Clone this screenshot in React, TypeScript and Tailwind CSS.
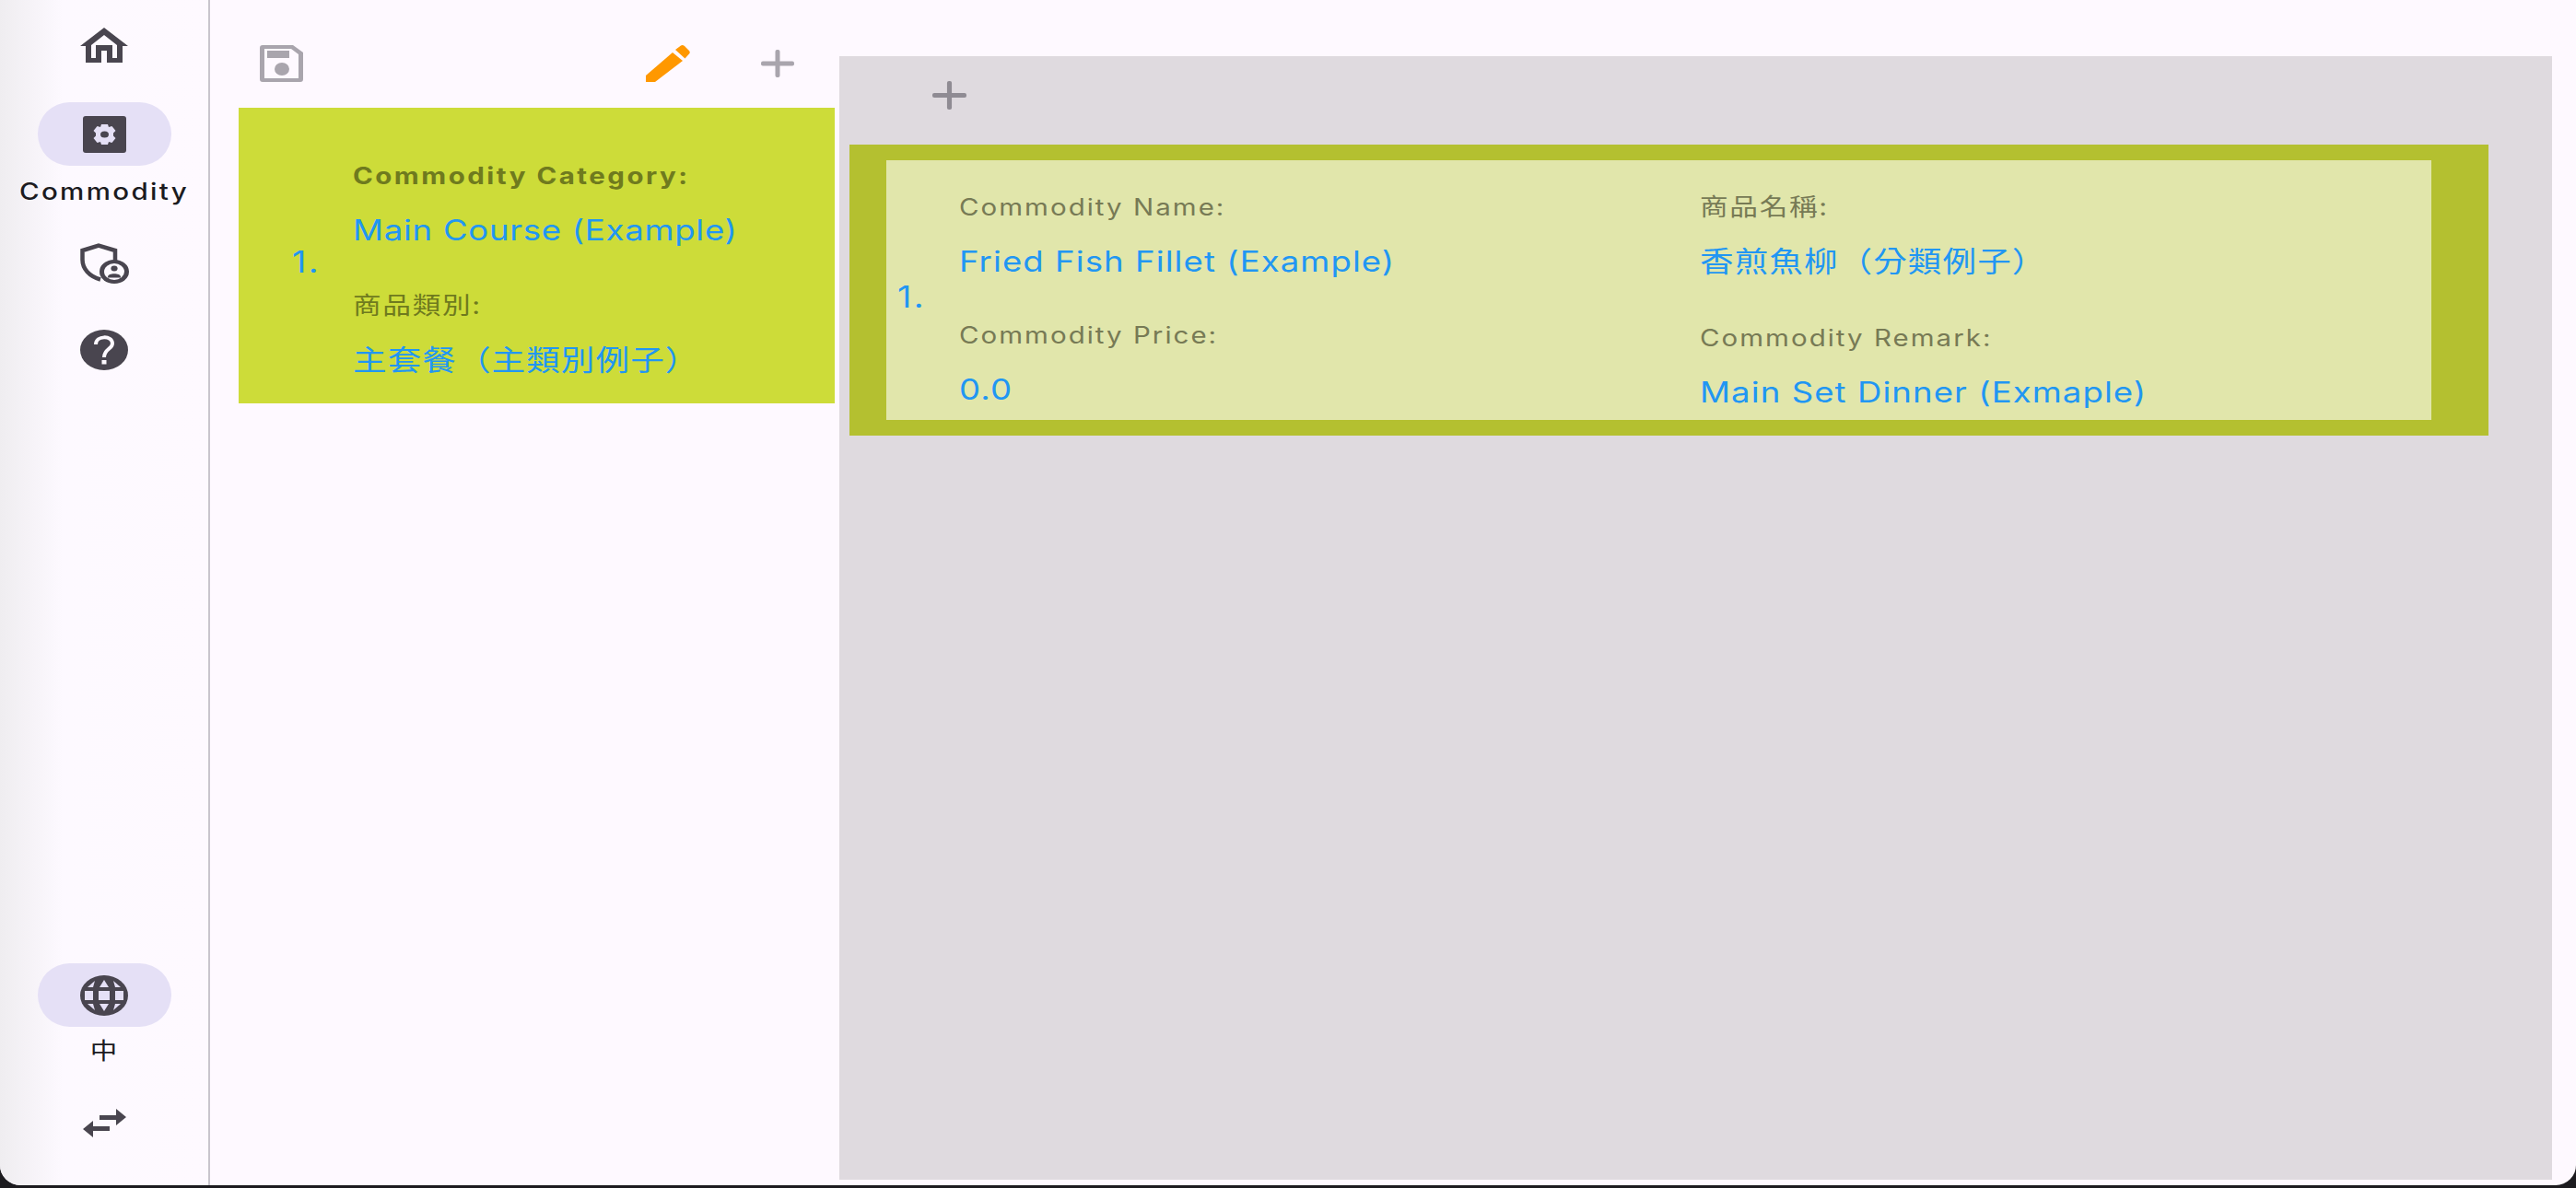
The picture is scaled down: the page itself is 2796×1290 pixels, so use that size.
import React from "react";

function HomeIcon() {
  return (
    <svg viewBox="0 0 52 38" preserveAspectRatio="none" className="w-[52px] h-[38px]">
      <path
        fillRule="evenodd"
        fill="#49454f"
        d="M26 0 L52 20 L46 20 L46 38 L29 38 L29 25 L23 25 L23 38 L6 38 L6 20 L0 20 Z M26 8 L12 19 L12 33 L17 33 L17 19 L35 19 L35 33 L40 33 L40 19 Z"
      />
    </svg>
  );
}

function SettingsAppIcon() {
  return (
    <svg viewBox="0 0 47 40" preserveAspectRatio="none" className="w-[47px] h-[40px]">
      <rect width="47" height="40" rx="3" fill="#49454f" />
      <path
        fill="#e5e0f6"
        fillRule="evenodd"
        d="M20 9 L27 9 L28 12 L31.5 11 L35.5 16 L33 18.5 L33 21.5 L35.5 24 L31.5 29 L28 28 L27 31 L20 31 L19 28 L15.5 29 L11.5 24 L14 21.5 L14 18.5 L11.5 16 L15.5 11 L19 12 Z M23.5 16.5 A4.5 3.5 0 1 0 23.5 23.5 A4.5 3.5 0 1 0 23.5 16.5 Z"
      />
    </svg>
  );
}

function ShieldIcon() {
  return (
    <svg viewBox="0 0 53 44" preserveAspectRatio="none" className="w-[53px] h-[44px]">
      <path fill="none" stroke="#49454f" strokeWidth="4.5" d="M38 19 L38 8 L20 2.5 L2.5 8 L2.5 18 C2.5 28 10 36 22 39.5" />
      <ellipse cx="37" cy="31" rx="16" ry="13" fill="#49454f" />
      <ellipse cx="37" cy="31" rx="11" ry="9" fill="#fdf9ff" />
      <ellipse cx="37" cy="27.5" rx="3.6" ry="3" fill="#49454f" />
      <path fill="#49454f" d="M30 36.5 C30 32 44 32 44 36.5 L44 37.5 L30 37.5 Z" />
    </svg>
  );
}

function HelpIcon() {
  return (
    <svg viewBox="0 0 52 44" preserveAspectRatio="none" className="w-[52px] h-[44px]">
      <ellipse cx="26" cy="22" rx="26" ry="22" fill="#49454f" />
      <path fill="none" stroke="#fdf9ff" strokeWidth="4" d="M17 16 C17 6 35 6 35 15 C35 21 26 21 26 30" />
      <rect x="23.5" y="33" width="5" height="4.5" fill="#fdf9ff" />
    </svg>
  );
}

function GlobeIcon() {
  return (
    <svg viewBox="0 0 52 44" preserveAspectRatio="none" className="w-[52px] h-[44px]">
      <ellipse cx="26" cy="22" rx="26" ry="22" fill="#49454f" />
      <g fill="#e5e0f6">
        <rect x="5" y="17" width="9" height="10" />
        <rect x="20" y="17" width="12" height="10" />
        <rect x="38" y="17" width="9" height="10" />
        <path d="M26 5 L31 13 L21 13 Z" />
        <path d="M26 39 L31 31 L21 31 Z" />
        <path d="M16 6 L8 13 L14 13 Z" />
        <path d="M36 6 L44 13 L38 13 Z" />
        <path d="M16 38 L8 31 L14 31 Z" />
        <path d="M36 38 L44 31 L38 31 Z" />
      </g>
    </svg>
  );
}

function SwapIcon() {
  return (
    <svg viewBox="0 0 48 31" preserveAspectRatio="none" className="w-[48px] h-[31px]">
      <path fill="#49454f" d="M19 7 L37 7 L37 0 L48 9 L37 18 L37 12 L19 12 Z" />
      <path fill="#49454f" d="M30 19 L12 19 L12 13 L1 22 L12 31 L12 24 L30 24 Z" />
    </svg>
  );
}

function SaveIcon() {
  return (
    <svg viewBox="0 0 47 40" preserveAspectRatio="none" className="w-[47px] h-[40px]">
      <path
        fillRule="evenodd"
        fill="#a9a5ad"
        d="M3 0 L36 0 L47 8 L47 37 Q47 40 44 40 L3 40 Q0 40 0 37 L0 3 Q0 0 3 0 Z M5 4 L5 36 L42 36 L42 10 L34 4 Z"
      />
      <rect x="8" y="6" width="24" height="8" fill="#a9a5ad" />
      <ellipse cx="24" cy="26" rx="8" ry="7" fill="#a9a5ad" />
    </svg>
  );
}

function PencilIcon() {
  return (
    <svg viewBox="0 0 48 40" preserveAspectRatio="none" className="w-[48px] h-[40px]">
      <path fill="#ff9800" d="M0 33 L29 8 L40 17 L10 40 L0 40 Z" />
      <path fill="#ff9800" d="M32 5 L38 0.5 Q40 -0.5 42 1 L47 6 Q48.5 8 47 9.5 L42.5 14.5 Z" />
    </svg>
  );
}

function PlusIcon({ className }: { className: string }) {
  return (
    <svg viewBox="0 0 36 30" preserveAspectRatio="none" className={className}>
      <rect x="0" y="12.5" width="36" height="5" rx="2" fill="currentColor" />
      <rect x="15.5" y="0" width="5" height="30" rx="2" fill="currentColor" />
    </svg>
  );
}

function RailButton({ children }: { children: React.ReactNode }) {
  return <div className="w-[145px] h-[69px] rounded-full bg-[#e5e0f6] flex items-center justify-center">{children}</div>;
}

// the source screen is stretched sideways, so text is widened the same way as the icons
function Field({ label, value, labelClass, valueClass, className }: { label: string; value: string; labelClass: string; valueClass: string; className?: string }) {
  return (
    <div className={className}>
      <div className={`h-[34px] leading-[34px] whitespace-nowrap origin-left scale-x-[1.18] ${labelClass}`}>{label}</div>
      <div className={`mt-[25px] h-[34px] leading-[34px] whitespace-nowrap origin-left scale-x-[1.18] text-[#2196f3] ${valueClass}`}>{value}</div>
    </div>
  );
}

const latinLabel = "text-[25px] tracking-[1.7px]";
const cjkLabel = "text-[26px] tracking-[1.4px]";
const latinValue = "text-[31px] tracking-[0.9px]";
const cjkValue = "text-[31px] tracking-[0.9px]";

export default function App() {
  return (
    <div className="w-[2796px] h-[1290px] bg-[#1c1b1f] overflow-hidden text-[#1c1b1f] font-[family-name:Inter,'Noto_Sans_CJK_TC',sans-serif]">
      <div className="w-full h-[1287px] rounded-b-[22px] overflow-hidden bg-[#fef9ff] flex">
        {/* navigation rail */}
        <nav className="w-[228px] shrink-0 h-full border-r-2 border-[#c9c5cd] bg-gradient-to-r from-[#efedf0] via-[#fdf9ff] via-30% to-[#fef9ff] flex flex-col items-center pt-[30px] pb-[52px]">
          <HomeIcon />
          <div className="mt-[43px]">
            <RailButton><SettingsAppIcon /></RailButton>
          </div>
          <div className="mt-[11px] h-[34px] leading-[34px] text-[25px] tracking-[2px] font-medium scale-x-[1.18]">Commodity</div>
          <div className="mt-[39px]"><ShieldIcon /></div>
          <div className="mt-[50px]"><HelpIcon /></div>
          <div className="mt-auto"><RailButton><GlobeIcon /></RailButton></div>
          <div className="mt-[9px] h-[34px] leading-[34px] text-[25px] scale-x-[1.18]">中</div>
          <div className="mt-[46px]"><SwapIcon /></div>
        </nav>

        {/* category column */}
        <section className="w-[678px] shrink-0 pl-[31px] flex flex-col">
          <div className="h-[117px] flex items-start pt-[49px]">
            <div className="ml-[23px]"><SaveIcon /></div>
            <div className="ml-auto"><PencilIcon /></div>
            <div className="ml-[77px] mr-[44px] mt-[5px] text-[#a9a5ad]"><PlusIcon className="w-[36px] h-[30px]" /></div>
          </div>
          <div className="w-[647px] h-[321px] bg-[#cddc39] flex items-start pt-[57px]">
            <div className="w-[124px] -mt-[57px] self-center pl-[58px] pt-[15px] text-[32px] tracking-[2px] text-[#2196f3]"><div className="origin-left scale-x-[1.18]">1.</div></div>
            <div className="flex flex-col">
              <Field label="Commodity Category:" value="Main Course (Example)" labelClass="text-[25px] tracking-[2.1px] font-bold text-[#6f7a1e]" valueClass="text-[31px] tracking-[0.6px]" />
              <Field label="商品類別:" value="主套餐（主類別例子）" labelClass={`${cjkLabel} text-[#6f7a1e]`} valueClass={cjkValue} className="mt-[48px]" />
            </div>
          </div>
        </section>

        {/* commodity panel */}
        <section className="ml-[5px] mt-[61px] mb-[6px] w-[1859px] bg-[#dfdadf] pl-[11px] flex flex-col">
          <div className="h-[96px] pt-[27px] pl-[90px] text-[#8f8b93]">
            <PlusIcon className="w-[37px] h-[31px]" />
          </div>
          <div className="w-[1779px] h-[316px] bg-[#b4c030] py-[17px] pl-[40px] pr-[62px]">
            <div className="h-full bg-[#e1e6ab] flex items-start pt-[34px]">
              <div className="w-[79px] -mt-[34px] self-center pl-[12px] pt-[16px] text-[32px] tracking-[2px] text-[#2196f3]"><div className="origin-left scale-x-[1.18]">1.</div></div>
              <div className="w-[804px] flex flex-col">
                <Field label="Commodity Name:" value="Fried Fish Fillet (Example)" labelClass={`${latinLabel} text-[#777a55]`} valueClass={latinValue} />
                <Field label="Commodity Price:" value="0.0" labelClass={`${latinLabel} text-[#777a55]`} valueClass={latinValue} className="mt-[46px]" />
              </div>
              <div className="flex flex-col">
                <Field label="商品名稱:" value="香煎魚柳（分類例子）" labelClass={`${cjkLabel} text-[#777a55]`} valueClass={cjkValue} />
                <Field label="Commodity Remark:" value="Main Set Dinner (Exmaple)" labelClass={`${latinLabel} text-[#777a55]`} valueClass={latinValue} className="mt-[49px]" />
              </div>
            </div>
          </div>
        </section>
      </div>
    </div>
  );
}
